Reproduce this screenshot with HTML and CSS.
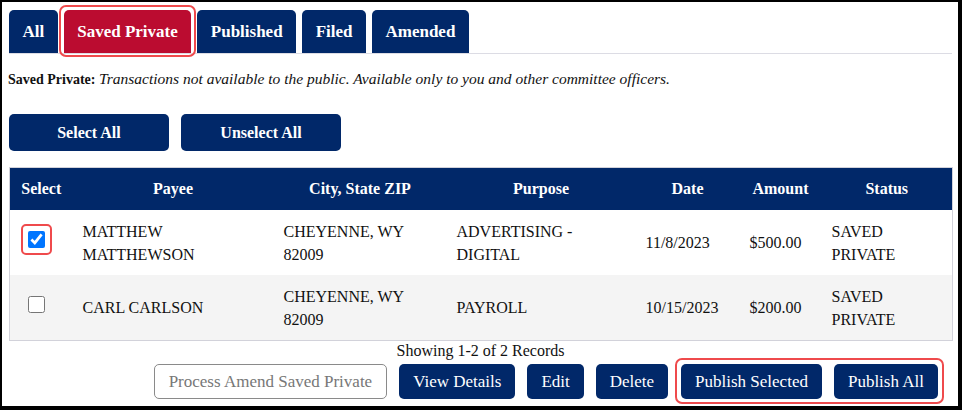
FILE: index.html
```html
<!DOCTYPE html>
<html lang="en">
<head>
<meta charset="utf-8">
<title>Transactions</title>
<link rel="stylesheet" href="styles.css">
</head>
<body>
<div class="page">
  <nav class="tabs">
    <span class="tab">All</span>
    <span class="tab tab-active">Saved Private</span>
    <span class="tab">Published</span>
    <span class="tab">Filed</span>
    <span class="tab">Amended</span>
  </nav>

  <p class="desc"><b>Saved Private:</b> <i>Transactions not available to the public. Available only to you and other committee officers.</i></p>

  <div class="select-actions">
    <button class="btn btn-wide">Select All</button>
    <button class="btn btn-wide">Unselect All</button>
  </div>

  <table class="records">
    <colgroup>
      <col class="c-select"><col class="c-payee"><col class="c-city"><col class="c-purpose"><col class="c-date"><col class="c-amount"><col class="c-status">
    </colgroup>
    <thead>
      <tr><th>Select</th><th>Payee</th><th>City, State ZIP</th><th>Purpose</th><th>Date</th><th>Amount</th><th>Status</th></tr>
    </thead>
    <tbody>
      <tr>
        <td class="sel"><span class="mark"><input type="checkbox" checked></span></td>
        <td>MATTHEW MATTHEWSON</td>
        <td>CHEYENNE, WY 82009</td>
        <td>ADVERTISING - DIGITAL</td>
        <td>11/8/2023</td>
        <td>$500.00</td>
        <td>SAVED PRIVATE</td>
      </tr>
      <tr class="alt">
        <td class="sel"><span class="mark-none"><input type="checkbox"></span></td>
        <td>CARL CARLSON</td>
        <td>CHEYENNE, WY 82009</td>
        <td>PAYROLL</td>
        <td>10/15/2023</td>
        <td>$200.00</td>
        <td>SAVED PRIVATE</td>
      </tr>
    </tbody>
  </table>

  <div class="count">Showing 1-2 of 2 Records</div>

  <div class="actions">
    <button class="btn btn-outline">Process Amend Saved Private</button>
    <button class="btn btn-sm">View Details</button>
    <button class="btn btn-sm">Edit</button>
    <button class="btn btn-sm">Delete</button>
    <span class="publish">
      <button class="btn btn-sm">Publish Selected</button>
      <button class="btn btn-sm">Publish All</button>
    </span>
  </div>
</div>
</body>
</html>
```

FILE: styles.css
```css
html, body {
  margin: 0;
  padding: 0;
  background: #000;
}

.page {
  box-sizing: border-box;
  width: 962px;
  height: 410px;
  border-style: solid;
  border-color: #000;
  border-width: 2px 4px 4px 2px;
  padding: 8px 6px 0 7px;
  background: #fff;
  font-family: "Liberation Serif", "Times New Roman", serif;
  color: #1a1a1a;
}

/* Tabs */
.tabs {
  display: flex;
  gap: 6px;
  border-bottom: 1px solid #dcdce4;
}

.tab {
  position: relative;
  display: flex;
  align-items: center;
  height: 43px;
  padding: 0 13.5px;
  background: #012869;
  color: #fff;
  font-weight: bold;
  font-size: 17px;
  border-radius: 5px 5px 0 0;
}

.tab-active {
  background: #bb0c30;
}

.tab-active::after {
  content: "";
  position: absolute;
  left: -5px;
  right: -5px;
  top: -5px;
  bottom: -4px;
  border: 2px solid #ef4a4c;
  border-radius: 7px;
}

/* Description */
.desc {
  margin: 16px 0 0 -1px;
  font-size: 14px;
  line-height: 18px;
  color: #111;
}

.desc i {
  font-size: 15.5px;
}

/* Buttons */
.btn {
  font-family: "Liberation Serif", "Times New Roman", serif;
  background: #012869;
  color: #fff;
  border: 0;
  border-radius: 5px;
  cursor: pointer;
}

.select-actions {
  display: flex;
  gap: 12px;
  margin-top: 25px;
}

.btn-wide {
  width: 160px;
  height: 37px;
  font-size: 16px;
  font-weight: bold;
}

/* Table */
.records {
  width: 100%;
  margin-top: 16px;
  border-collapse: collapse;
  table-layout: fixed;
  border: 1px solid #d2d2da;
  font-size: 16px;
}

.c-select { width: 63px; }
.c-payee { width: 201px; }
.c-city { width: 173px; }
.c-purpose { width: 189px; }
.c-date { width: 104px; }
.c-amount { width: 82px; }
.c-status { width: 131px; }

.records th {
  height: 42px;
  padding: 0 8px;
  background: #012869;
  color: #fff;
  font-weight: bold;
  text-align: center;
}

.records td {
  height: 65px;
  padding: 0 10px;
  line-height: 23px;
  text-align: left;
  vertical-align: middle;
  color: #111;
}

.records tr.alt td {
  background: #f4f4f4;
}

.records td.sel {
  padding-left: 18px;
}

.records input[type="checkbox"] {
  display: block;
  width: 17px;
  height: 17px;
  margin: 0;
}

.mark,
.mark-none {
  position: relative;
  display: block;
  width: 17px;
  margin-bottom: 7px;
}

.mark::after {
  content: "";
  position: absolute;
  box-sizing: border-box;
  left: -7px;
  top: -7px;
  width: 31px;
  height: 31px;
  border: 2px solid #ef4a4c;
  border-radius: 5px;
}

/* Footer */
.count {
  text-align: center;
  font-size: 16px;
  line-height: 20px;
  color: #111;
}

.actions {
  display: flex;
  justify-content: flex-end;
  gap: 12px;
  margin-top: 3px;
  padding-right: 14px;
}

.btn-sm {
  height: 35px;
  padding: 0 14px;
  font-size: 17px;
}

.btn-outline {
  height: 35px;
  padding: 0 14px;
  font-size: 17px;
  background: #fff;
  color: #777;
  border: 1px solid #8a8a8a;
}

.publish {
  position: relative;
  display: flex;
  gap: 12px;
  margin-left: 1px;
}

.publish::after {
  content: "";
  position: absolute;
  left: -6px;
  right: -6px;
  top: -6px;
  bottom: -5px;
  border: 2px solid #ef4a4c;
  border-radius: 7px;
  pointer-events: none;
}
```
